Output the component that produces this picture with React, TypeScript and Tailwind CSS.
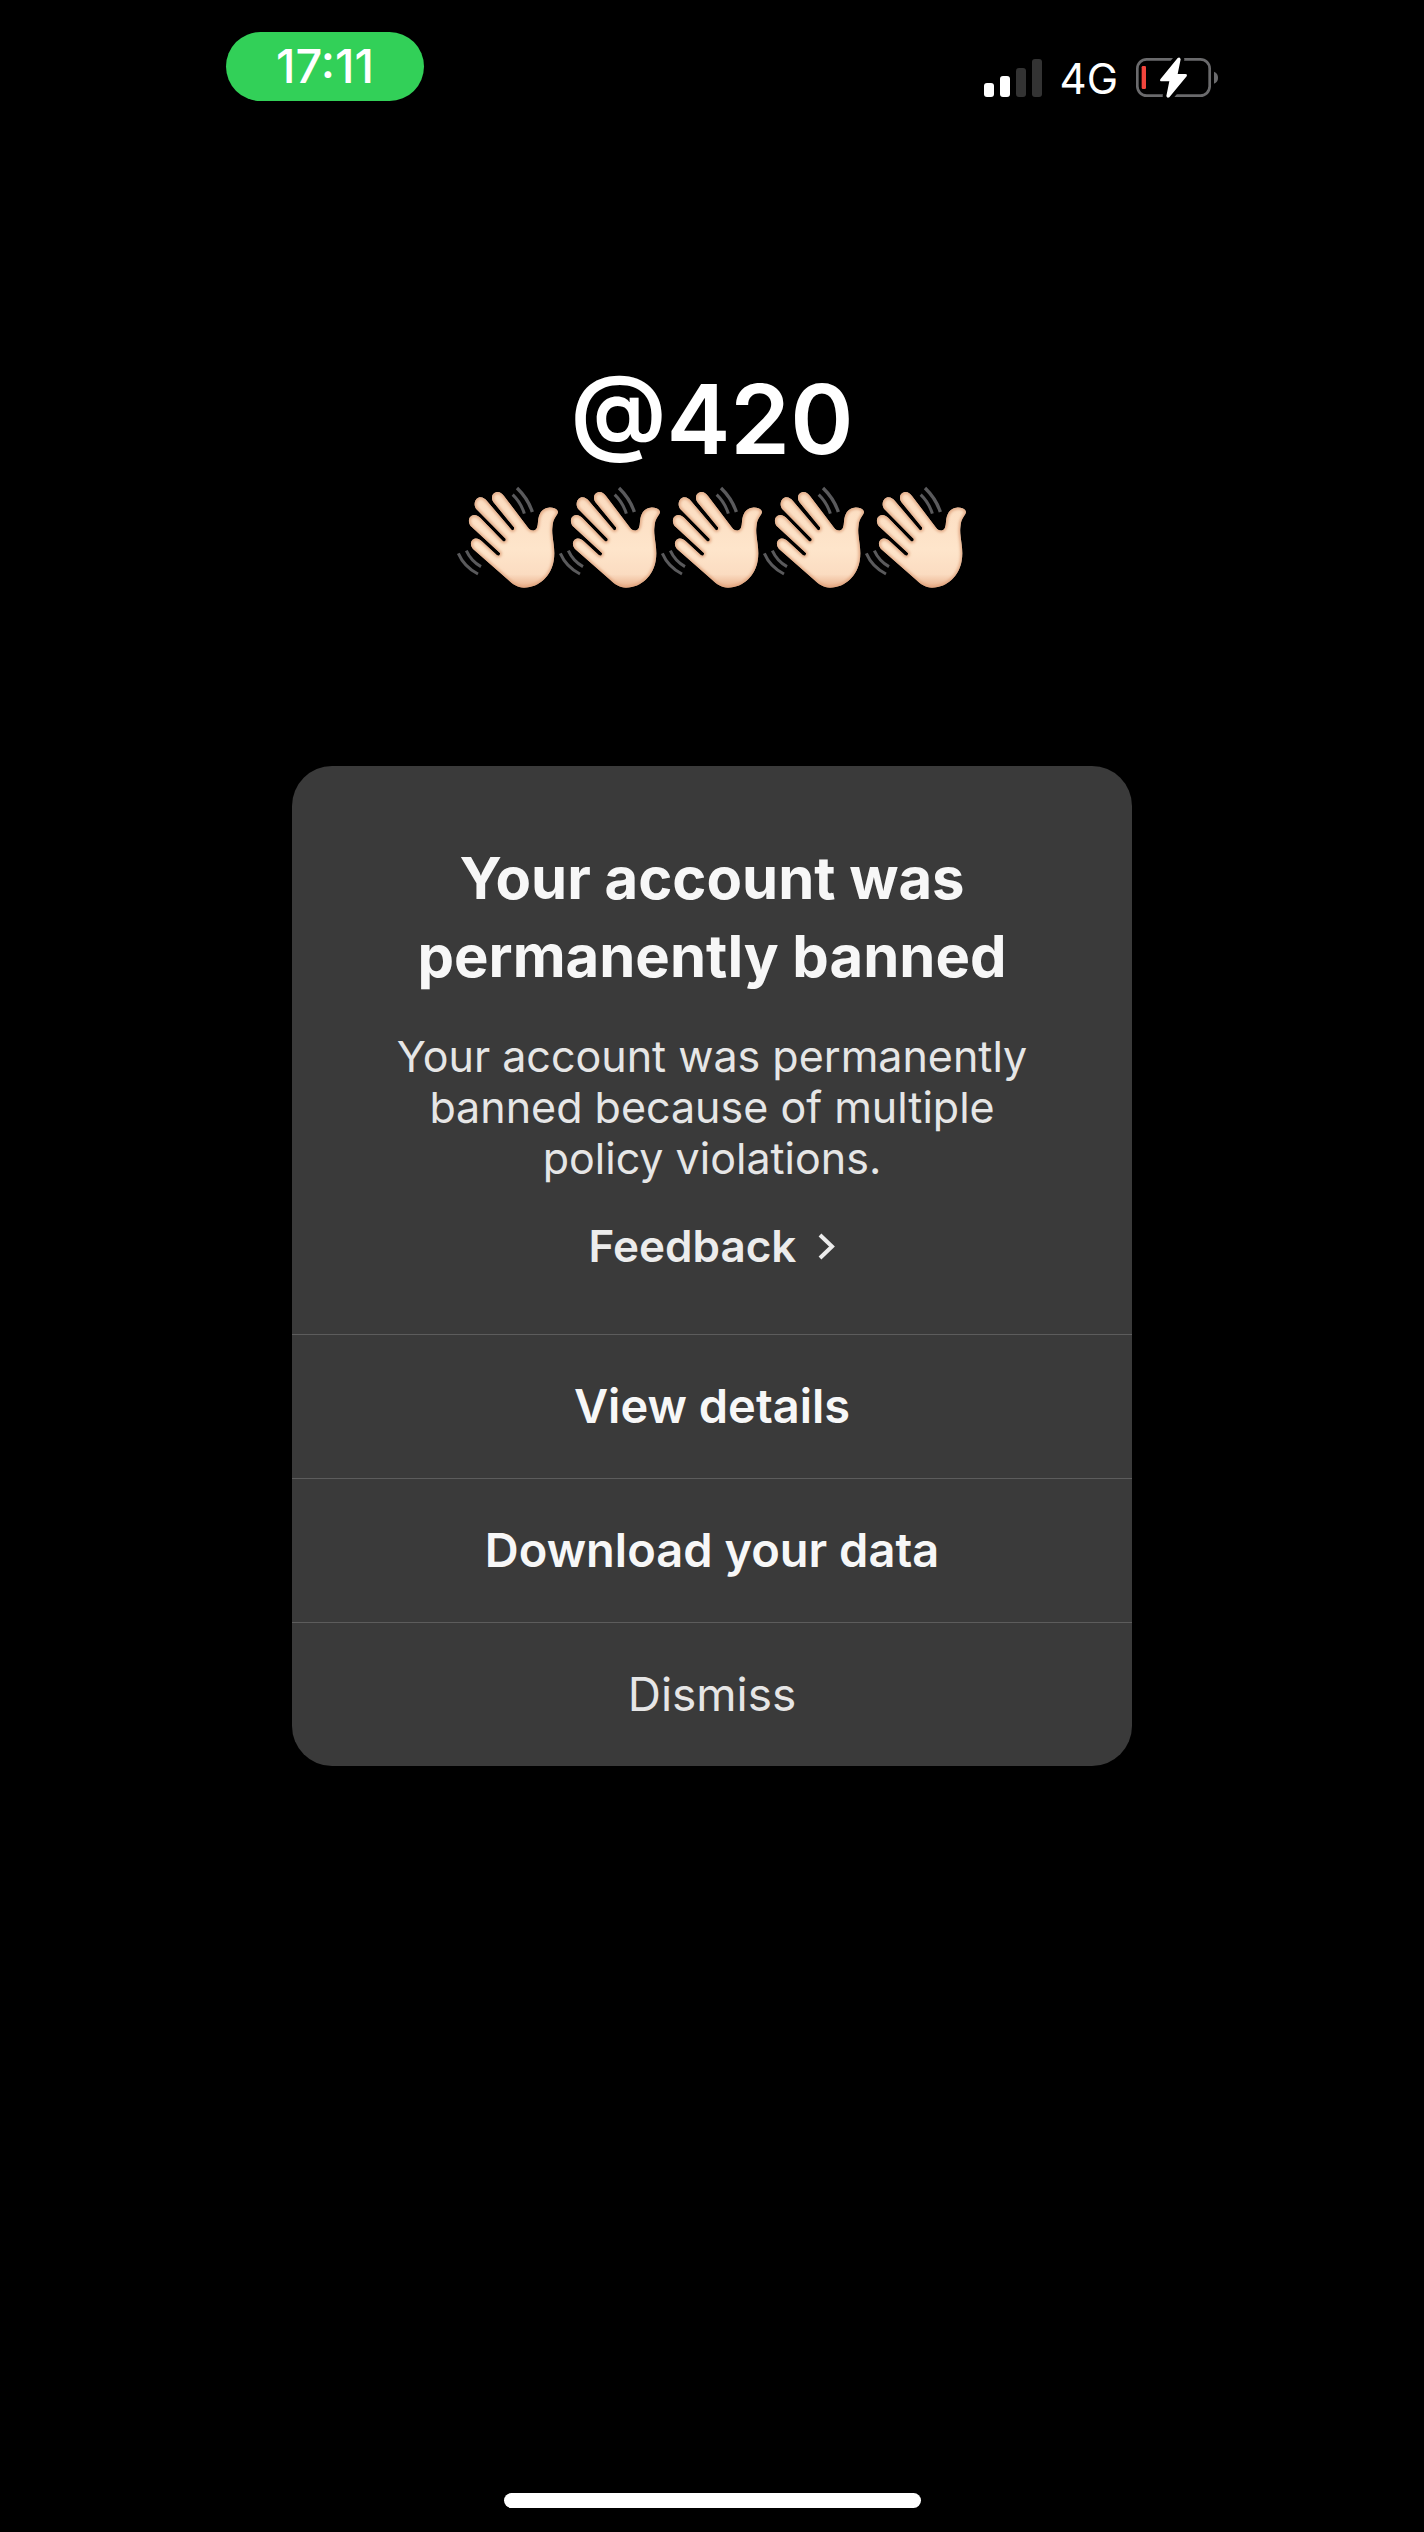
interface WaveProps {
    id: string;
}

interface ActionProps {
    label: string;
    muted?: boolean;
}

const HAND_PATH =
    "M205 330 L100 238 C90 228 90 212 102 207 C110 203 120 208 127 215 L171 256 Q181 260 180 249 L92 168 C84 158 85 142 95 137 C105 132 115 138 122 145 L189 214 Q199 217 197 206 L108 116 C100 104 104 88 115 83 C126 79 135 86 141 93 L215 180 Q224 183 222 172 L160 96 C152 84 156 70 168 67 C178 64 186 70 192 78 L262 170 Q272 184 283 181 Q293 178 294 155 C296 130 306 116 325 113 C342 111 354 118 354 127 C352 136 342 144 339 158 C336 176 336 185 338 200 C340 220 346 245 341 272 C334 315 300 352 252 353 C232 353 218 342 205 330 Z";

// Waving hand, drawn with soft shading along the edges
function WavingHand({ id }: WaveProps) {
    return (
        <svg viewBox="51 45 306 318" className="w-[102px] h-[106px] overflow-visible" aria-hidden="true">
            <defs>
                <linearGradient id={`${id}-skin`} x1="0" y1="0" x2="0" y2="1">
                    <stop offset="0" stopColor="#fbdcc0" />
                    <stop offset="0.6" stopColor="#fee5cb" />
                    <stop offset="0.86" stopColor="#fbdcc1" />
                    <stop offset="1" stopColor="#e9b08c" />
                </linearGradient>
                <filter id={`${id}-soft`}>
                    <feGaussianBlur stdDeviation="4" />
                </filter>
                <clipPath id={`${id}-clip`}>
                    <path d={HAND_PATH} />
                </clipPath>
            </defs>
            <g fill="none" stroke="#5a5a5c">
                <path d="M231 54 Q264 86 277 126" strokeWidth="10" />
                <path d="M218 74 Q243 98 253 131" strokeWidth="9" />
                <path d="M55 250 Q72 290 114 312" strokeWidth="9" />
                <path d="M79 242 Q93 273 123 290" strokeWidth="9" />
            </g>
            <path d={HAND_PATH} fill={`url(#${id}-skin)`} />
            <g clipPath={`url(#${id}-clip)`}>
                <path d={HAND_PATH} fill="none" stroke="#dfa27c" strokeWidth="9" filter={`url(#${id}-soft)`} />
            </g>
        </svg>
    );
}

function Signal() {
    return (
        <svg viewBox="0 0 58 38" className="w-[58px] h-[38px]" role="img" aria-label="Signal strength">
            <rect x="0" y="24" width="10" height="14" rx="3" fill="#fff" />
            <rect x="16" y="17" width="10" height="21" rx="3" fill="#fff" />
            <rect x="32" y="9" width="10" height="29" rx="3" fill="#333" />
            <rect x="48" y="0" width="10" height="38" rx="3" fill="#333" />
        </svg>
    );
}

function Battery() {
    return (
        <svg viewBox="498 54 246 117" className="w-[82px] h-[39px] overflow-visible" role="img" aria-label="Battery charging">
            <rect x="502" y="58" width="217" height="109" rx="28" fill="none" stroke="#6a6a6c" strokeWidth="8" />
            <path d="M732 95 Q744 100 744 113 Q744 126 732 131 Z" fill="#6a6a6c" />
            <rect x="515" y="78" width="13" height="69" rx="4" fill="#f2453c" />
            <path
                d="M623 54 L571 118 Q568 124 575 124 L598 124 L589 168 Q591 176 598 172 L650 109 Q653 102 646 102 L623 102 L632 58 Q630 50 623 54 Z"
                fill="#fff"
                stroke="#000"
                strokeWidth="22"
                strokeLinejoin="round"
                paintOrder="stroke"
            />
        </svg>
    );
}

function Action({ label, muted }: ActionProps) {
    return (
        <button
            type="button"
            className={`w-full h-36 border-t border-[#5c5c5c] ${muted ? "text-[46px] font-normal text-[#e6e6e6]" : "text-[47px] font-semibold text-[#f7f7f7]"}`}>
            {label}
        </button>
    );
}

export default function App() {
    return (
        <div className="flex flex-col items-center min-h-screen bg-black pt-8 pb-6 font-['Inter','Liberation_Sans',sans-serif] text-white">
            {/* Status bar */}
            <header className="flex items-end justify-between w-full pl-[226px] pr-[206px]">
                <div className="flex items-center justify-center w-[198px] h-[69px] rounded-full bg-[#32d058] text-[47px] font-medium">
                    17:11
                </div>
                <div className="flex items-end gap-[18px] pb-1">
                    <Signal />
                    <span className="text-[42px] leading-[36px]">4G</span>
                    <Battery />
                </div>
            </header>

            <h1 className="mt-[268px] text-[96px] leading-[100px] font-semibold">@420</h1>
            <div className="flex mt-4" role="img" aria-label="Waving hands">
                {["a", "b", "c", "d", "e"].map((id) => (
                    <WavingHand key={id} id={id} />
                ))}
            </div>

            <main
                role="dialog"
                aria-labelledby="ban-title"
                className="w-[840px] max-w-full mt-[175px] rounded-[40px] overflow-hidden bg-[#3a3a3a]">
                <div className="flex flex-col items-center px-20 pt-[73px] pb-[62px] text-center">
                    <h2 id="ban-title" className="text-[58px] leading-[78px] font-bold text-[#f7f7f7]">
                        Your account was permanently banned
                    </h2>
                    <p className="mt-9 text-[43px] leading-[51px] text-[#e6e6e6]">
                        Your account was permanently banned because of multiple policy violations.
                    </p>
                    <button type="button" className="flex items-center gap-[22px] mt-9 text-[44px] leading-[52px] font-semibold text-[#ececec]">
                        Feedback
                        <svg viewBox="0 0 17 27" className="w-[17px] h-[27px]" fill="none" stroke="currentColor" strokeWidth="4" aria-hidden="true">
                            <path d="M2 2 L14 13.5 L2 25" />
                        </svg>
                    </button>
                </div>
                <Action label="View details" />
                <Action label="Download your data" />
                <Action label="Dismiss" muted />
            </main>

            {/* Home indicator */}
            <div className="w-[417px] h-[15px] mt-auto rounded-full bg-white" />
        </div>
    );
}
